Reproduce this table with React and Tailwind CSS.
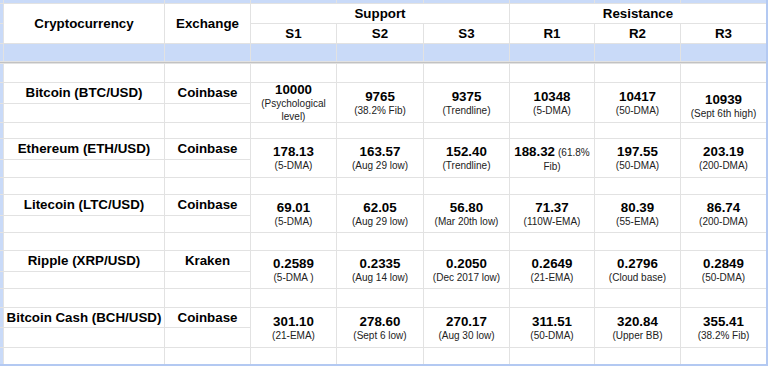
const BLOCKS = [
  {
    name: 'Bitcoin (BTC/USD)',
    ex: 'Coinbase',
    vals: [
      ['10000', '(Psychological level)'],
      ['9765', '(38.2% Fib)'],
      ['9375', '(Trendline)'],
      ['10348', '(5-DMA)'],
      ['10417', '(50-DMA)'],
      ['10939', '(Sept 6th high)', 'low'],
    ],
  },
  {
    name: 'Ethereum (ETH/USD)',
    ex: 'Coinbase',
    vals: [
      ['178.13', '(5-DMA)'],
      ['163.57', '(Aug 29 low)'],
      ['152.40', '(Trendline)'],
      ['188.32', '(61.8% Fib)', 'inline'],
      ['197.55', '(50-DMA)'],
      ['203.19', '(200-DMA)'],
    ],
  },
  {
    name: 'Litecoin (LTC/USD)',
    ex: 'Coinbase',
    vals: [
      ['69.01', '(5-DMA)'],
      ['62.05', '(Aug 29 low)'],
      ['56.80', '(Mar 20th low)'],
      ['71.37', '(110W-EMA)'],
      ['80.39', '(55-EMA)'],
      ['86.74', '(200-DMA)'],
    ],
  },
  {
    name: 'Ripple (XRP/USD)',
    ex: 'Kraken',
    vals: [
      ['0.2589', '(5-DMA )'],
      ['0.2335', '(Aug 14 low)'],
      ['0.2050', '(Dec 2017 low)'],
      ['0.2649', '(21-EMA)'],
      ['0.2796', '(Cloud base)'],
      ['0.2849', '(50-DMA)'],
    ],
  },
  {
    name: 'Bitcoin Cash (BCH/USD)',
    ex: 'Coinbase',
    vals: [
      ['301.10', '(21-EMA)'],
      ['278.60', '(Sept 6 low)'],
      ['270.17', '(Aug 30 low)'],
      ['311.51', '(50-DMA)'],
      ['320.84', '(Upper BB)'],
      ['355.41', '(38.2% Fib)'],
    ],
  },
];

const strip = 'bg-[#c9daf8]';
const white = 'bg-white';
const head = 'bg-white flex items-center justify-center text-[13.33px] font-bold whitespace-nowrap';

function BlankRow({ k }) {
  return (
    <>
      <div className={strip} />
      {[0, 1, 2, 3, 4, 5, 6, 7].map((i) => (
        <div key={k + '-' + i} className={white} />
      ))}
    </>
  );
}

function Value({ v }) {
  const [num, sub, kind] = v;
  if (kind === 'inline') {
    // R1 for ETH: note starts on the number's line, "Fib)" wraps below
    const words = sub.split(' ');
    return (
      <div className="row-span-2 bg-white flex flex-col items-center justify-center text-center px-[3px]">
        <div className="flex items-baseline gap-[3px] leading-[15px] whitespace-nowrap">
          <span className="text-[13.33px] font-bold">{num}</span>
          <span className="text-[10px] text-[#222]">{words[0]}</span>
        </div>
        <div className="text-[10px] leading-[13px] text-[#222]">{words.slice(1).join(' ')}</div>
      </div>
    );
  }
  return (
    <div
      className={`row-span-2 bg-white flex flex-col items-center justify-center text-center px-[3px] ${
        kind === 'low' ? 'pt-[6px]' : ''
      }`}
    >
      <div className="text-[13.33px] font-bold leading-[15px]">{num}</div>
      <div className="text-[10px] leading-[13px] text-[#222]">{sub}</div>
    </div>
  );
}

export default function App() {
  return (
    <div className="w-[768px] h-[366px] bg-white overflow-hidden font-['Liberation_Sans',Arial,sans-serif] text-black">
      <div className="grid w-[768px] h-[366px] gap-px bg-[#e2e2e2] border-r-2 border-b-2 border-[#b3c9f2] grid-cols-[3px_160px_85px_85px_86px_85px_84px_85px_85px] grid-rows-[3px_19px_19px_17px_1px_18px_20px_18px_15px_20px_17px_16px_20px_16px_17px_20px_16px_18px_19px_19px_16px]">
        {/* top strip */}
        {[0, 1, 2, 3, 4, 5, 6, 7, 8].map((i) => (
          <div key={'t' + i} className={strip} />
        ))}

        {/* header row 1 */}
        <div className={strip} />
        <div className={`${head} row-span-2`}>Cryptocurrency</div>
        <div className={`${head} row-span-2`}>Exchange</div>
        <div className={`${head} col-span-3`}>Support</div>
        <div className={`${head} col-span-3`}>Resistance</div>

        {/* header row 2 */}
        <div className={strip} />
        {['S1', 'S2', 'S3', 'R1', 'R2', 'R3'].map((h) => (
          <div key={h} className={head}>
            {h}
          </div>
        ))}

        {/* blue band */}
        <div className={strip} />
        {[0, 1, 2, 3, 4, 5, 6, 7].map((i) => (
          <div key={'b' + i} className="bg-[#c9daf8]" />
        ))}

        {/* frozen divider */}
        <div className="col-span-9 bg-[#c2c2c2]" />

        {BLOCKS.map((b, bi) => (
          <div key={b.name} className="contents">
            <BlankRow k={'blank' + bi} />
            <div className={strip} />
            <div className={head}>{b.name}</div>
            <div className={head}>{b.ex}</div>
            {b.vals.map((v, i) => (
              <Value key={i} v={v} />
            ))}
            <div className={strip} />
            <div className={white} />
            <div className={white} />
          </div>
        ))}

        <BlankRow k="end" />
      </div>
    </div>
  );
}
